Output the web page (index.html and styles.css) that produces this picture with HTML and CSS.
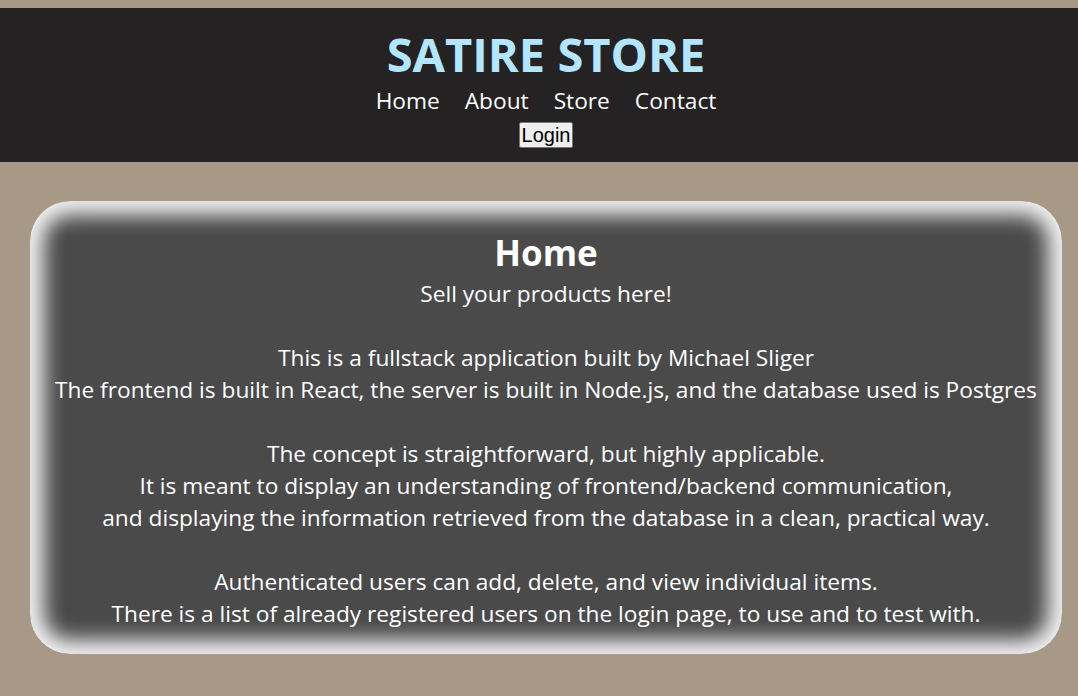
FILE: index.html
```html
<!DOCTYPE html>
<html lang="en">
<head>
<meta charset="utf-8">
<title>Satire Store</title>
<link rel="stylesheet" href="styles.css">
</head>
<body>
<div class="page">
  <header class="site-header">
    <h1 class="brand">SATIRE STORE</h1>
    <nav class="nav">
      <a class="nav-link" href="#">Home</a>
      <a class="nav-link" href="#">About</a>
      <a class="nav-link" href="#">Store</a>
      <a class="nav-link" href="#">Contact</a>
    </nav>
    <button class="login-btn" type="button">Login</button>
  </header>
  <main class="panel">
    <h2 class="panel-title">Home</h2>
    <p class="panel-text">Sell your products here!<br><br>This is a fullstack application built by Michael Sliger<br>The frontend is built in React, the server is built in Node.js, and the database used is Postgres<br><br>The concept is straightforward, but highly applicable.<br>It is meant to display an understanding of frontend/backend communication,<br>and displaying the information retrieved from the database in a clean, practical way.<br><br>Authenticated users can add, delete, and view individual items.<br>There is a list of already registered users on the login page, to use and to test with.</p>
  </main>
</div>
</body>
</html>
```
FILE: styles.css
```css
html, body {
  margin: 0;
  padding: 0;
}
body {
  background: #a89886;
  font-family: "Open Sans", "Noto Sans", sans-serif;
  color: #ffffff;
  overflow: hidden;
}
.page {
  width: 1092px;
  padding-top: 8px;
  min-height: 688px;
}
.site-header {
  background: #242223;
  text-align: center;
  padding: 18px 0 14px;
}
.brand {
  margin: 0;
  font-size: 47px;
  line-height: 56px;
  font-weight: 700;
  color: #b3e5fc;
}
.nav {
  margin-top: 3px;
  display: flex;
  justify-content: center;
  gap: 25px;
  line-height: 32px;
  font-size: 22.7px;
}
.nav-link {
  color: #ffffff;
  text-decoration: none;
}
.login-btn {
  display: block;
  margin: 5px auto 0;
  height: 26px;
  box-sizing: border-box;
  font-family: "Liberation Sans", Arial, sans-serif;
  font-size: 20px;
  line-height: 22px;
  padding: 0 2px;
  color: #000;
  background: #efefef;
  border: 1px solid #767676;
  border-radius: 2px;
}
.panel {
  margin: 39px 30px 0;
  box-sizing: border-box;
  height: 453px;
  padding: 32px 0 24px;
  background: #4a4a4a;
  border-radius: 40px;
  box-shadow: inset 0 0 20px 14px #f2f2f2;
  text-align: center;
}
.panel-title {
  margin: 0;
  font-size: 35px;
  line-height: 40px;
  font-weight: 700;
}
.panel-text {
  margin: 5px 0 0;
  font-size: 22.7px;
  line-height: 32px;
}
```
